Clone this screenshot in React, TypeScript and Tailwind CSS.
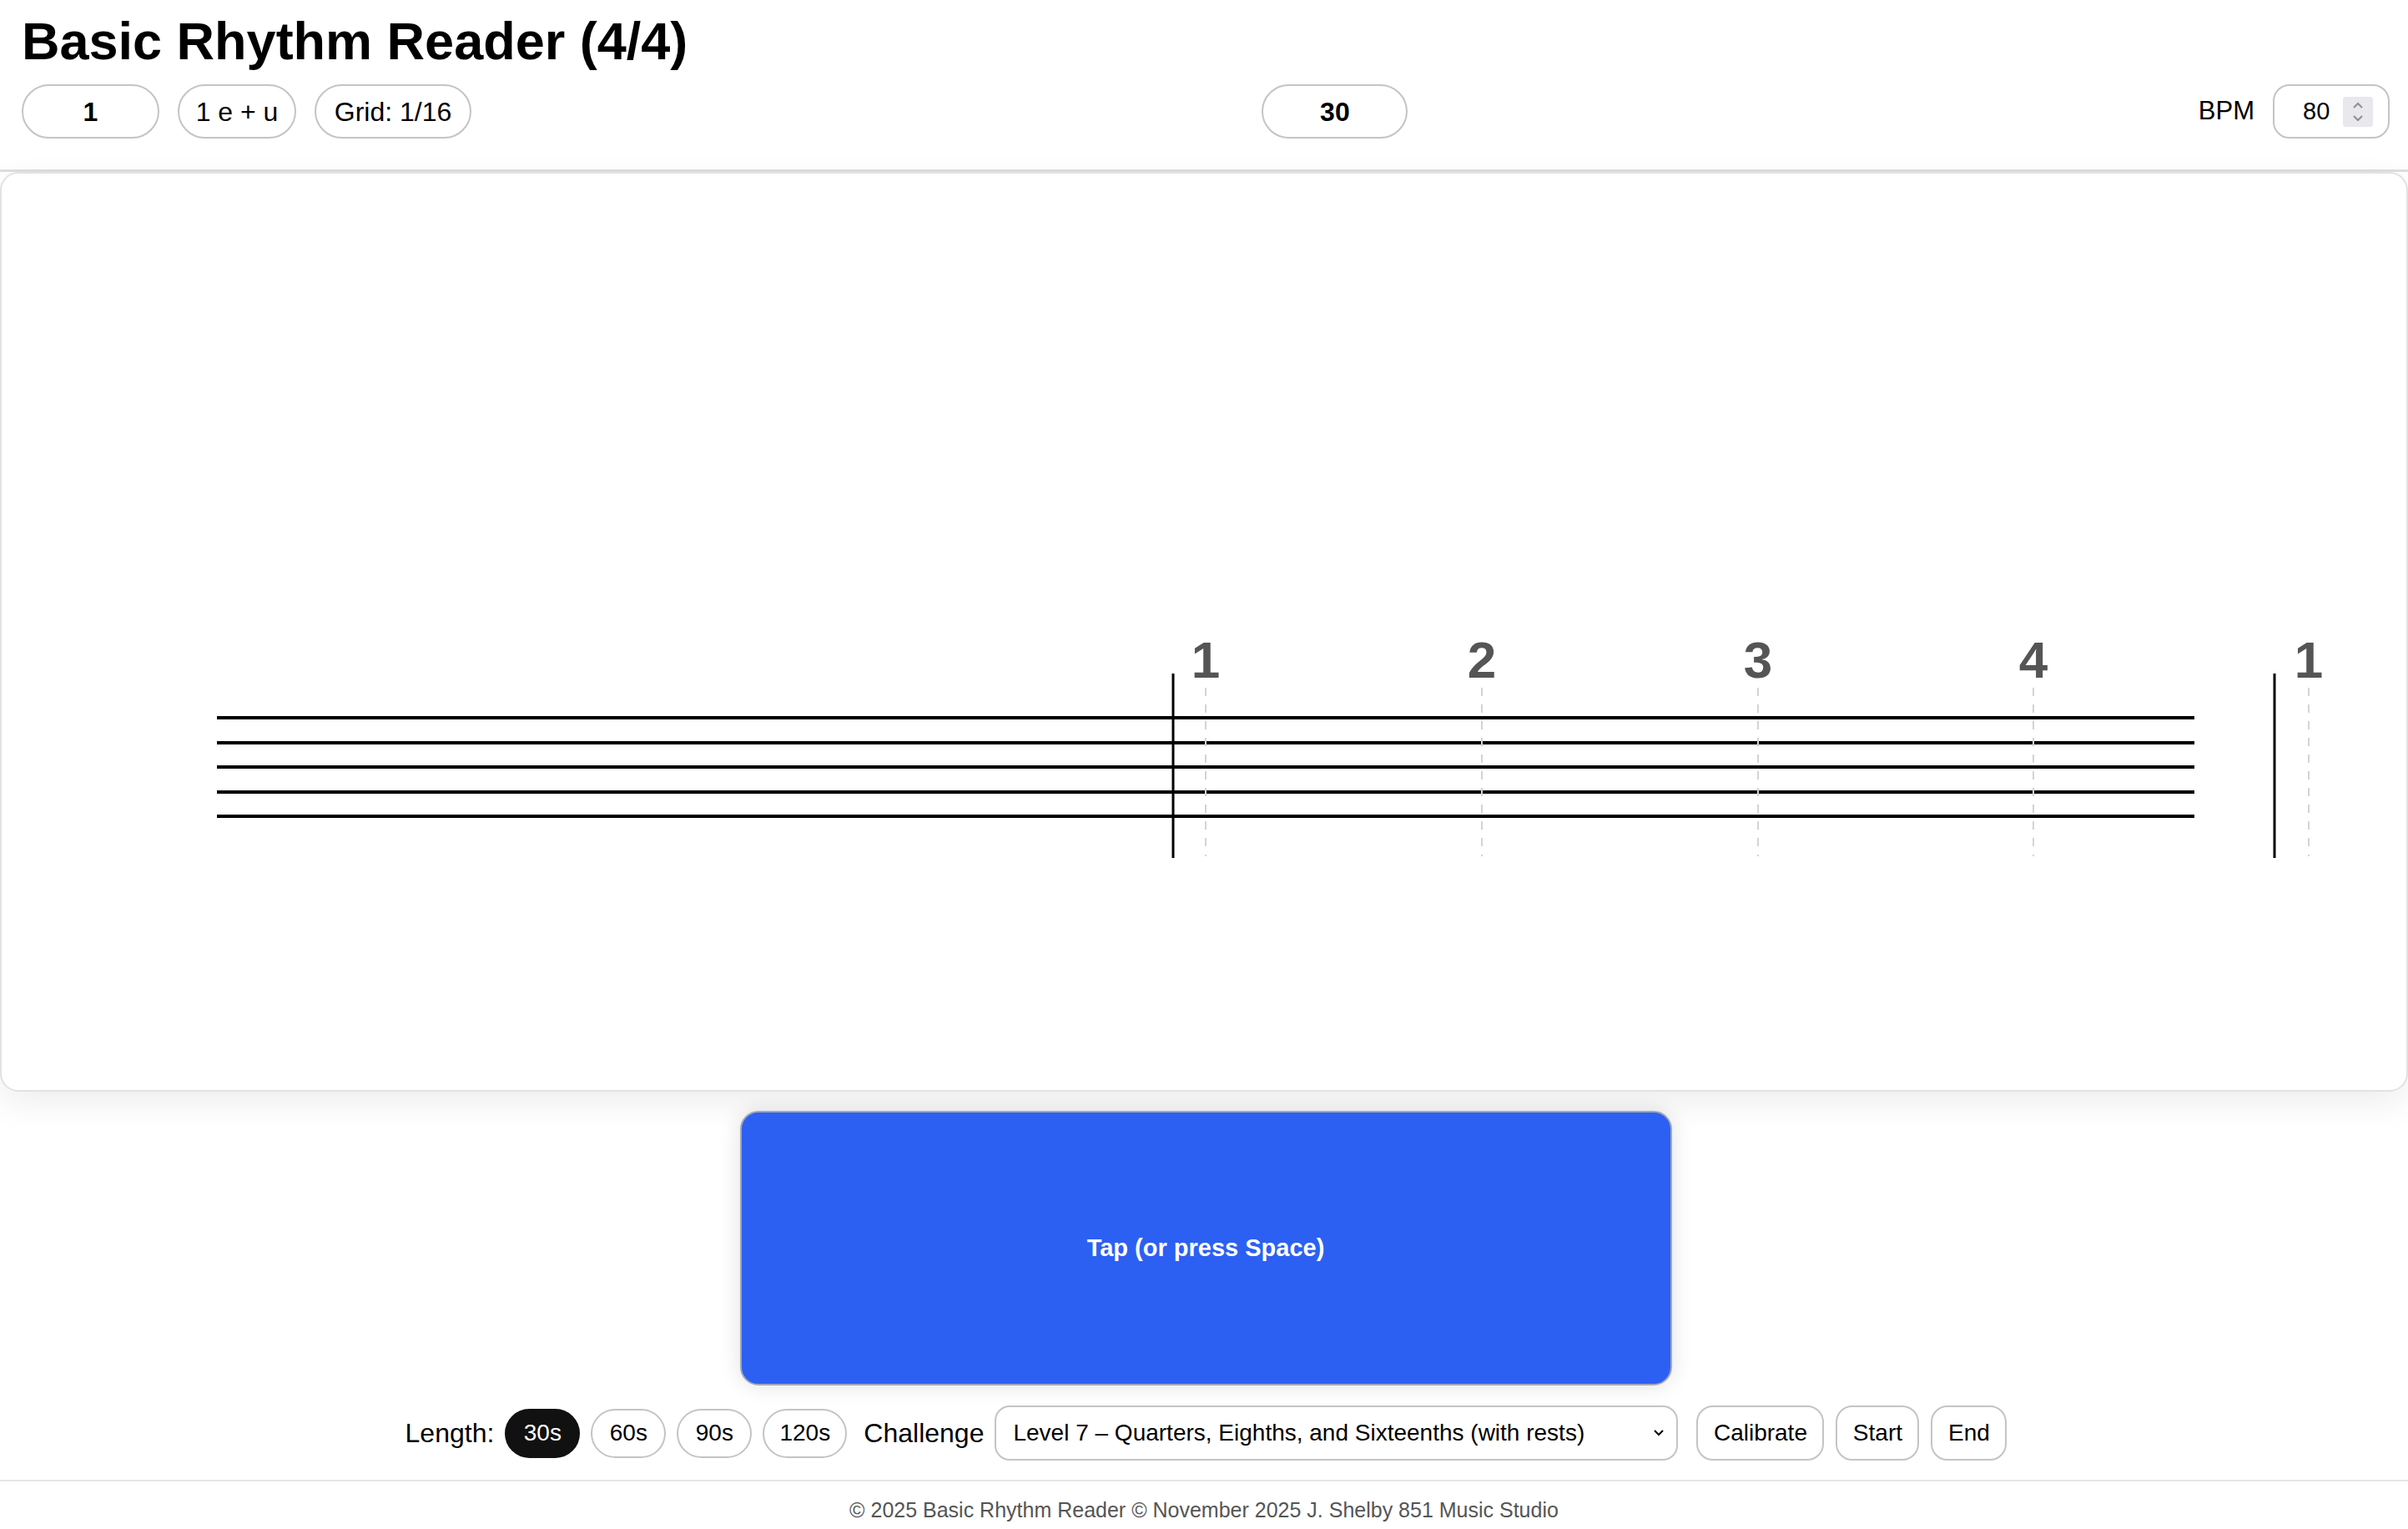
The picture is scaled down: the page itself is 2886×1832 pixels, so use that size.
import React from "react";

const pill =
  "flex items-center justify-center rounded-full border-2 border-[#c4c4c4] bg-white text-black";
const rbtn =
  "flex items-center justify-center rounded-[20px] border-2 border-[#c4c4c4] bg-white text-black text-[28px] h-[66px]";

function Staff() {
  const lines = [652, 682, 711, 741, 770];
  const beats = [
    { x: 1443, n: "1" },
    { x: 1774, n: "2" },
    { x: 2105, n: "3" },
    { x: 2435, n: "4" },
    { x: 2765, n: "1" },
  ];
  return (
    <svg width="2882" height="1098" viewBox="0 0 2882 1098" className="block">
      {lines.map((y) => (
        <line key={y} x1={258} x2={2628} y1={y} y2={y} stroke="#000" strokeWidth={4} />
      ))}
      <line x1={1404} x2={1404} y1={599} y2={820} stroke="#000" strokeWidth={3} />
      <line x1={2724} x2={2724} y1={599} y2={820} stroke="#000" strokeWidth={3} />
      {beats.map((b, i) => (
        <g key={i}>
          <line
            x1={b.x}
            x2={b.x}
            y1={616}
            y2={818}
            stroke="#d4d4d4"
            strokeWidth={2}
            strokeDasharray="10 10"
          />
          <text
            x={b.x}
            y={604}
            textAnchor="middle"
            fontSize={62}
            fontWeight={700}
            fill="#555555"
            fontFamily="'Liberation Sans', Arial, sans-serif"
          >
            {b.n}
          </text>
        </g>
      ))}
    </svg>
  );
}

export default function App() {
  return (
    <div className="min-h-screen bg-white font-['Liberation_Sans',Arial,sans-serif] text-black overflow-hidden">
      <header className="pl-[26px] pr-[22px] pt-[12px] pb-[37px] border-b-[3px] border-[#dedede]">
        <h1 className="text-[63px] leading-[74px] font-bold">Basic Rhythm Reader (4/4)</h1>
        <div className="mt-[15px] flex items-center justify-between">
          <div className="flex items-center gap-[22px]">
            <div className={`${pill} w-[165px] h-[65px] text-[32px] font-bold`}>1</div>
            <div className={`${pill} w-[142px] h-[65px] text-[32px]`}>1 e + u</div>
            <div className={`${pill} w-[188px] h-[65px] text-[32px]`}>Grid: 1/16</div>
          </div>
          <div className={`${pill} w-[175px] h-[65px] text-[32px] font-bold`}>30</div>
          <div className="flex items-center gap-[22px]">
            <span className="text-[31px]">BPM</span>
            <div className="flex items-center w-[140px] h-[65px] rounded-[20px] border-2 border-[#c4c4c4] pl-[34px] pr-[18px]">
              <span className="text-[29px] flex-1">80</span>
              <svg width="36" height="36" viewBox="0 0 36 36">
                <rect x="0" y="0" width="36" height="36" rx="3" fill="#e8e8ed" />
                <path d="M13 13 L18 8 L23 13" fill="none" stroke="#8e8e93" strokeWidth="2" />
                <path d="M13 23 L18 28 L23 23" fill="none" stroke="#8e8e93" strokeWidth="2" />
              </svg>
            </div>
          </div>
        </div>
      </header>

      <main className="h-[1102px] rounded-[22px] border-2 border-[#e2e2e2] bg-white shadow-[0_14px_40px_rgba(0,0,0,0.07)] overflow-hidden">
        <Staff />
      </main>

      <div className="mt-[23px] flex justify-center pl-[4px]">
        <button className="w-[1117px] h-[329px] rounded-[22px] border-2 border-[#a3a7b4] bg-[#2c60f2] text-white text-[29px] font-bold shadow-[0_0_26px_rgba(0,0,0,0.12)]">
          Tap (or press Space)
        </button>
      </div>

      <div className="mt-[24px] flex items-center justify-center h-[66px] pl-[5px]">
        <span className="text-[32px]">Length:</span>
        <div className={`${pill} ml-[13px] w-[90px] h-[59px] text-[28px] !bg-[#111111] !border-[#111111] !text-white`}>30s</div>
        <div className={`${pill} ml-[13px] w-[90px] h-[59px] text-[28px]`}>60s</div>
        <div className={`${pill} ml-[13px] w-[90px] h-[59px] text-[28px]`}>90s</div>
        <div className={`${pill} ml-[13px] w-[101px] h-[59px] text-[28px]`}>120s</div>
        <span className="ml-[20px] text-[32px]">Challenge</span>
        <div className="ml-[13px] flex items-center w-[819px] h-[66px] rounded-[18px] border-2 border-[#c4c4c4] pl-[20px] pr-[14px]">
          <span className="flex-1 text-[28px]">Level 7 – Quarters, Eighths, and Sixteenths (with rests)</span>
          <svg width="14" height="10" viewBox="0 0 14 10">
            <path d="M2 2 L7 7 L12 2" fill="none" stroke="#000" strokeWidth="2" />
          </svg>
        </div>
        <div className={`${rbtn} ml-[22px] w-[153px]`}>Calibrate</div>
        <div className={`${rbtn} ml-[14px] w-[100px]`}>Start</div>
        <div className={`${rbtn} ml-[14px] w-[91px]`}>End</div>
      </div>

      <footer className="mt-[23px] border-t-2 border-[#e6e6e6] pt-[20px] pb-[8px] text-center text-[25px] leading-[29px] text-[#555555]">
        © 2025 Basic Rhythm Reader © November 2025 J. Shelby 851 Music Studio
      </footer>
    </div>
  );
}
